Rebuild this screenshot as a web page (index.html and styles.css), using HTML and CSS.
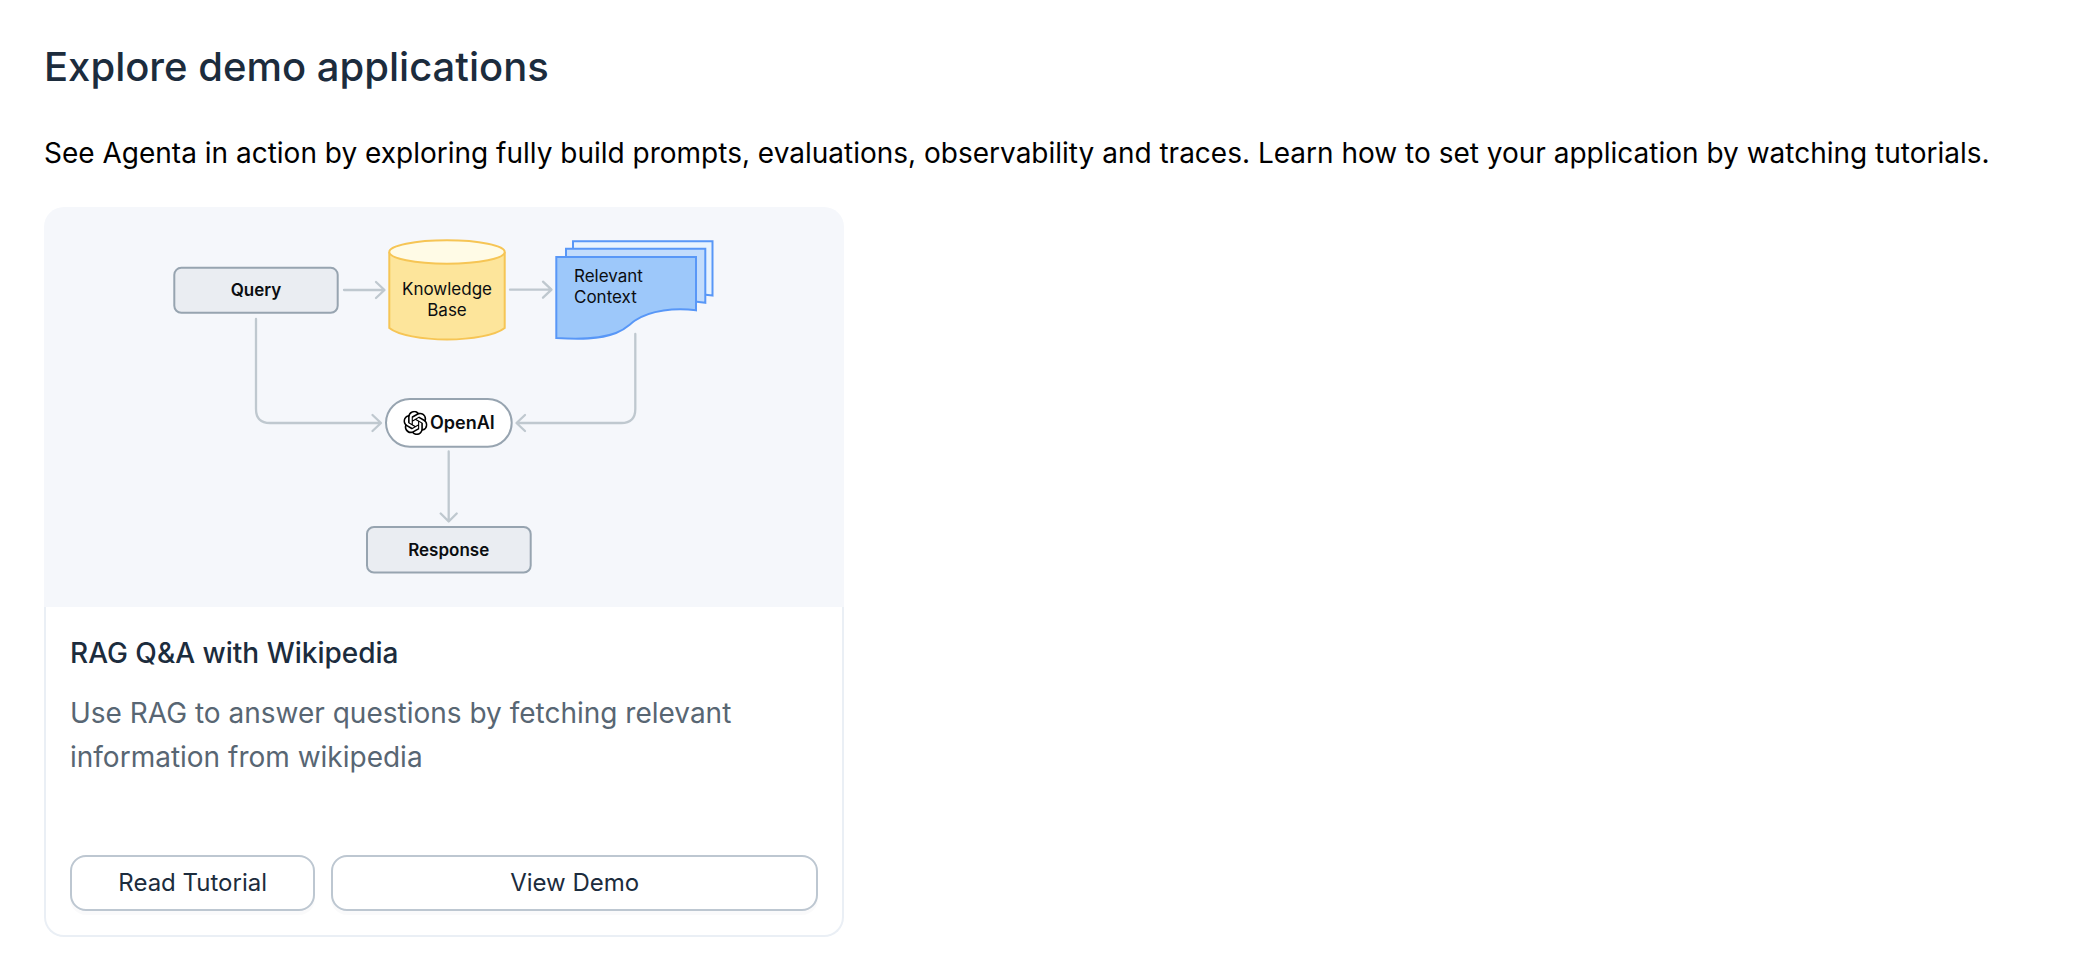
FILE: index.html
```html
<!DOCTYPE html>
<html lang="en">
<head>
<meta charset="utf-8">
<title>Explore demo applications</title>
<link rel="stylesheet" href="styles.css">
</head>
<body>
<main class="page">
  <h1 class="page-title">Explore demo applications</h1>
  <p class="page-intro">See Agenta in action by exploring fully build prompts, evaluations, observability and traces. Learn how to set your application by watching tutorials.</p>
  <article class="card">
    <svg class="diagram" viewBox="0 0 800 400" role="img" aria-label="RAG pipeline diagram">
      <rect class="box" x="130.3" y="60.8" width="163.4" height="45" rx="7"/>
      <text class="label label-strong" x="212" y="89">Query</text>

      <g class="arrow">
        <path d="M300 83H340M332 75l8.500 8-8.500 8"/>
        <path d="M466 82.700H507M499 74.700l8.500 8-8.500 8"/>
        <path d="M212 112V202Q212 216 226 216H336M328.500 208l8.500 8-8.500 8"/>
        <path d="M591.300 127V202Q591.300 216 577.300 216H473.500M481 208l-8.500 8 8.500 8"/>
        <path d="M404.700 244.500V314M396.700 306.500l8 8 8-8"/>
      </g>

      <g class="store">
        <path d="M345.300 45V121C354 128 378 132.500 403 132.500S452 128 460.700 121V45"/>
        <ellipse class="store-top" cx="403" cy="45" rx="57.700" ry="11.700"/>
      </g>
      <text class="label" x="403" y="88">Knowledge</text>
      <text class="label" x="403" y="109">Base</text>

      <g class="sheets">
        <path class="sheet-back" d="M529 34.300H668.500V88.500C654 86 635 87 620 91L529 100Z"/>
        <path class="sheet-middle" d="M522 41.800H661.300V95.700C647 93 630 94 613 98L522 110Z"/>
        <path class="sheet-front" d="M512.300 50H652V103.300C632 100.500 606 103 591 113.500C584 118.500 582 122 572 126C555 132.500 535 132.500 512.300 131Z"/>
      </g>
      <text class="label label-start" x="530" y="75">Relevant</text>
      <text class="label label-start" x="530" y="96">Context</text>

      <rect class="pill" x="342" y="192" width="125.700" height="47.700" rx="23.850"/>
      <svg x="359.300" y="203.800" width="24.300" height="24.300" viewBox="0 0 24 24">
        <path d="M22.2819 9.8211a5.9847 5.9847 0 0 0-.5157-4.9108 6.0462 6.0462 0 0 0-6.5098-2.9A6.0651 6.0651 0 0 0 4.9807 4.1818a5.9847 5.9847 0 0 0-3.9977 2.9 6.0462 6.0462 0 0 0 .7427 7.0966 5.98 5.98 0 0 0 .511 4.9107 6.051 6.051 0 0 0 6.5146 2.9001A5.9847 5.9847 0 0 0 13.2599 24a6.0557 6.0557 0 0 0 5.7718-4.2058 5.9894 5.9894 0 0 0 3.9977-2.9001 6.0557 6.0557 0 0 0-.7475-7.0729zm-9.022 12.6081a4.4755 4.4755 0 0 1-2.8764-1.0408l.1419-.0804 4.7783-2.7582a.7948.7948 0 0 0 .3927-.6813v-6.7369l2.02 1.1686a.071.071 0 0 1 .038.052v5.5826a4.504 4.504 0 0 1-4.4945 4.4944zm-9.6607-4.1254a4.4708 4.4708 0 0 1-.5346-3.0137l.142.0852 4.783 2.7582a.7712.7712 0 0 0 .7806 0l5.8428-3.3685v2.3324a.0804.0804 0 0 1-.0332.0615L9.74 19.9502a4.4992 4.4992 0 0 1-6.1408-1.6464zM2.3408 7.8956a4.485 4.485 0 0 1 2.3655-1.9728V11.6a.7664.7664 0 0 0 .3879.6765l5.8144 3.3543-2.0201 1.1685a.0757.0757 0 0 1-.071 0l-4.8303-2.7865A4.504 4.504 0 0 1 2.3408 7.872zm16.5963 3.8558L13.1038 8.364 15.1192 7.2a.0757.0757 0 0 1 .071 0l4.8303 2.7913a4.4944 4.4944 0 0 1-.6765 8.1042v-5.6772a.79.79 0 0 0-.407-.667zm2.0107-3.0231l-.142-.0852-4.7735-2.7818a.7759.7759 0 0 0-.7854 0L9.409 9.2297V6.8974a.0662.0662 0 0 1 .0284-.0615l4.8303-2.7866a4.4992 4.4992 0 0 1 6.6802 4.66zM8.3065 12.863l-2.02-1.1638a.0804.0804 0 0 1-.038-.0567V6.0742a4.4992 4.4992 0 0 1 7.3757-3.4537l-.142.0805L8.704 5.459a.7948.7948 0 0 0-.3927.6813zm1.0976-2.3654l2.602-1.4998 2.6069 1.4998v2.9994l-2.5974 1.4997-2.6067-1.4997Z"/>
      </svg>
      <text class="label label-strong label-start label-brand" x="386" y="222">OpenAI</text>

      <rect class="box" x="323" y="320" width="163.700" height="45.500" rx="7"/>
      <text class="label label-strong" x="404.700" y="349">Response</text>
    </svg>
    <div class="card-body">
      <h2 class="card-title">RAG Q&amp;A with Wikipedia</h2>
      <p class="card-text">Use RAG to answer questions by fetching relevant information from wikipedia</p>
      <div class="card-actions">
        <button class="button" type="button">Read Tutorial</button>
        <button class="button button-wide" type="button">View Demo</button>
      </div>
    </div>
  </article>
</main>
</body>
</html>
```
FILE: styles.css
```css
* {
  box-sizing: border-box;
}

body {
  margin: 0;
  background: #fff;
  color: #000;
  font-family: Inter, "Liberation Sans", sans-serif;
  font-size: 28px;
  line-height: 44px;
}

h1, h2, p {
  margin: 0;
}

.page {
  padding: 39px 44px 32px;
}

.page-title {
  margin-bottom: 36px;
  color: #1c2c3d;
  font-size: 40px;
  font-weight: 500;
  line-height: 56px;
}

.page-intro {
  margin-bottom: 32px;
}

.card {
  max-width: 800px;
}

.diagram {
  display: block;
  width: 100%;
  background: #f5f7fb;
  border-radius: 20px 20px 0 0;
}

.card-body {
  padding: 24px 24px;
  border: 2px solid #eaeff5;
  border-top: 0;
  border-radius: 0 0 20px 20px;
}

.card-title {
  margin-bottom: 16px;
  color: #1c2c3d;
  font-size: 28px;
  font-weight: 500;
}

.card-text {
  min-height: 132px;
  margin-bottom: 32px;
  color: #586673;
}

.card-actions {
  display: flex;
  gap: 16px;
}

.button {
  flex: 1 1 0;
  height: 56px;
  padding: 0;
  border: 2px solid #bdc7d1;
  border-radius: 16px;
  background: #fff;
  box-shadow: 0 4px 0 rgba(5, 23, 41, 0.02);
  color: #1c2c3d;
  font: inherit;
  font-size: 24px;
  line-height: 40px;
  cursor: pointer;
}

.button-wide {
  flex-grow: 2;
}

.box {
  fill: #eaedf2;
  stroke: #97a4b0;
  stroke-width: 2;
}

.pill {
  fill: #fff;
  stroke: #97a4b0;
  stroke-width: 2;
}

.arrow {
  fill: none;
  stroke: #bfc8cf;
  stroke-width: 2.3;
  stroke-linecap: round;
  stroke-linejoin: round;
}

.store {
  fill: #fde59b;
  stroke: #f6c555;
  stroke-width: 2;
}

.store-top {
  fill: #fffbe6;
}

.sheets {
  stroke: #5897f7;
  stroke-width: 2;
}

.sheet-back {
  fill: #e8f3fe;
}

.sheet-middle {
  fill: #c2dcfc;
}

.sheet-front {
  fill: #9dc8fa;
}

.label {
  fill: #0b0d10;
  font-size: 17px;
  text-anchor: middle;
}

.label-strong {
  font-weight: 600;
}

.label-start {
  text-anchor: start;
}

.label-brand {
  font-size: 18px;
}
```
